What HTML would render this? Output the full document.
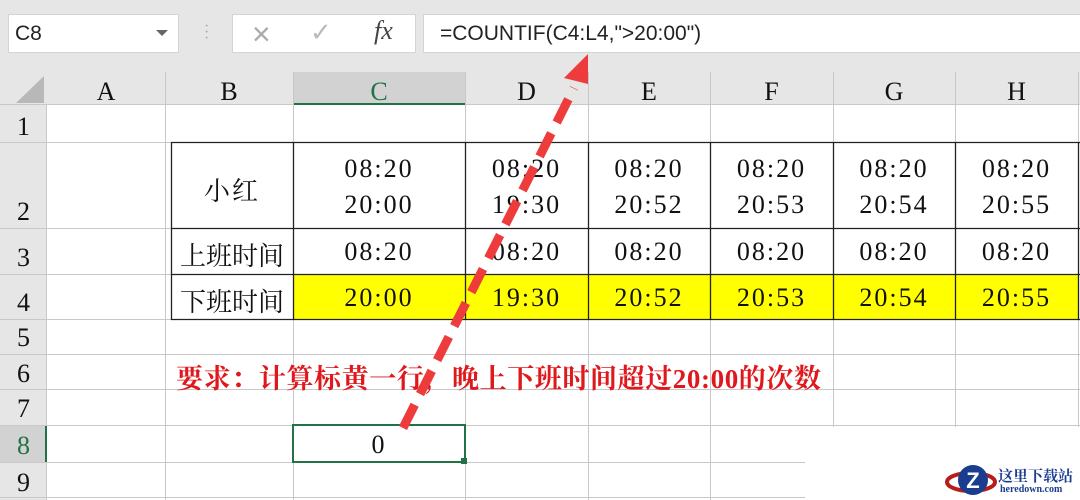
<!DOCTYPE html><html><head><meta charset="utf-8"><style>
body{margin:0;width:1080px;height:500px;overflow:hidden;background:#fff;position:relative;font-family:"Liberation Serif","Noto Serif CJK SC",serif}
.a{position:absolute;box-sizing:border-box}
.top{left:0;top:0;width:1080px;height:72px;background:#e6e6e6}
.box{background:#fff;border:1px solid #d4d4d4}
.hd{background:#e6e6e6}
.t{position:absolute;text-align:center;font-size:26px;color:#111;letter-spacing:2px}
.h{letter-spacing:0}
</style></head><body>
<div class="a top"></div>
<div class="a box" style="left:8px;top:14px;width:171px;height:39px"></div>
<div class="a" style="left:15px;top:22px;font:21px 'Liberation Sans',sans-serif;color:#222">C8</div>
<div class="a" style="left:156px;top:30px;width:0;height:0;border-left:6px solid transparent;border-right:6px solid transparent;border-top:6px solid #666"></div>
<div class="a" style="left:204px;top:24px;color:#aaa;font-size:16px;line-height:6px">·<br>·<br>·</div>
<div class="a box" style="left:232px;top:14px;width:184px;height:39px"></div>
<div class="a" style="left:252px;top:16px;font:32px 'Liberation Sans',sans-serif;color:#aaa">×</div>
<div class="a" style="left:310px;top:18px;font:26px 'DejaVu Sans',sans-serif;color:#bbb">✓</div>
<div class="a" style="left:374px;top:16px;font:italic 26px 'Liberation Serif',serif;color:#444">fx</div>
<div class="a box" style="left:423px;top:14px;width:670px;height:39px"></div>
<div class="a" style="left:440px;top:22px;font:21px 'Liberation Sans',sans-serif;color:#222">=COUNTIF(C4:L4,"&gt;20:00")</div>
<div class="a hd" style="left:0;top:72px;width:1080px;height:33px;border-bottom:1px solid #c8c8c8"></div>
<div class="a hd" style="left:0;top:105px;width:47px;height:395px;border-right:1px solid #c8c8c8"></div>
<div class="a" style="left:16px;top:76px;width:0;height:0;border-left:28px solid transparent;border-bottom:27px solid #b8b8b8"></div>
<div class="a" style="left:293px;top:72px;width:172px;height:33px;background:#d2d2d2;border-bottom:2px solid #217346"></div>
<div class="a" style="left:0;top:425px;width:47px;height:37px;background:#d2d2d2;border-right:2px solid #217346"></div>
<svg class="a" style="left:0;top:72px" width="1080" height="428">
<g stroke="#c8c8c8" stroke-width="1">
<line x1="165.5" y1="0" x2="165.5" y2="428"/><line x1="293.5" y1="0" x2="293.5" y2="428"/><line x1="465.5" y1="0" x2="465.5" y2="428"/><line x1="588.5" y1="0" x2="588.5" y2="428"/><line x1="710.5" y1="0" x2="710.5" y2="428"/><line x1="833.5" y1="0" x2="833.5" y2="428"/><line x1="955.5" y1="0" x2="955.5" y2="428"/><line x1="1078.5" y1="0" x2="1078.5" y2="428"/>
<line x1="0" y1="70.5" x2="1080" y2="70.5"/><line x1="0" y1="156.5" x2="1080" y2="156.5"/><line x1="0" y1="202.5" x2="1080" y2="202.5"/><line x1="0" y1="247.5" x2="1080" y2="247.5"/><line x1="0" y1="282.5" x2="1080" y2="282.5"/><line x1="0" y1="317.5" x2="1080" y2="317.5"/><line x1="0" y1="353.5" x2="1080" y2="353.5"/><line x1="0" y1="390.5" x2="1080" y2="390.5"/><line x1="0" y1="425.5" x2="1080" y2="425.5"/>
</g>
<rect x="293" y="202" width="785" height="45" fill="#ffff00"/>
<g stroke="#222" stroke-width="1.3">
<line x1="171" y1="70.5" x2="1080" y2="70.5"/><line x1="171" y1="156.5" x2="1080" y2="156.5"/><line x1="171" y1="202.5" x2="1080" y2="202.5"/><line x1="171" y1="247.5" x2="1080" y2="247.5"/>
<line x1="171.5" y1="70" x2="171.5" y2="248"/><line x1="293.5" y1="70" x2="293.5" y2="248"/><line x1="465.5" y1="70" x2="465.5" y2="248"/><line x1="588.5" y1="70" x2="588.5" y2="248"/><line x1="710.5" y1="70" x2="710.5" y2="248"/><line x1="833.5" y1="70" x2="833.5" y2="248"/><line x1="955.5" y1="70" x2="955.5" y2="248"/><line x1="1078.5" y1="70" x2="1078.5" y2="248"/>
</g>
<rect x="805" y="355" width="275" height="73" fill="#fff"/>
<rect x="293" y="353" width="172" height="37" fill="#fff" stroke="#217346" stroke-width="2"/>
<rect x="461" y="386" width="6" height="6" fill="#217346"/>
</svg>
<div class="t h" style="left:47px;top:77px;width:118px">A</div>
<div class="t h" style="left:165px;top:77px;width:128px">B</div>
<div class="t h" style="left:293px;top:77px;width:172px;color:#217346">C</div>
<div class="t h" style="left:465px;top:77px;width:123px">D</div>
<div class="t h" style="left:588px;top:77px;width:122px">E</div>
<div class="t h" style="left:710px;top:77px;width:123px">F</div>
<div class="t h" style="left:833px;top:77px;width:122px">G</div>
<div class="t h" style="left:955px;top:77px;width:123px">H</div>
<div class="t h" style="left:0;top:112px;width:47px">1</div>
<div class="t h" style="left:0;top:197px;width:47px">2</div>
<div class="t h" style="left:0;top:243px;width:47px">3</div>
<div class="t h" style="left:0;top:288px;width:47px">4</div>
<div class="t h" style="left:0;top:323px;width:47px">5</div>
<div class="t h" style="left:0;top:359px;width:47px">6</div>
<div class="t h" style="left:0;top:394px;width:47px">7</div>
<div class="t h" style="left:0;top:431px;width:47px;color:#217346">8</div>
<div class="t h" style="left:0;top:468px;width:47px">9</div>
<div class="t" style="left:171px;top:171px;width:122px">小红</div>
<div class="t h" style="left:171px;top:236px;width:122px">上班时间</div>
<div class="t h" style="left:171px;top:282px;width:122px">下班时间</div>
<div class="t" style="left:293px;top:151px;width:172px;line-height:36px">08:20<br>20:00</div>
<div class="t" style="left:465px;top:151px;width:123px;line-height:36px">08:20<br>19:30</div>
<div class="t" style="left:588px;top:151px;width:122px;line-height:36px">08:20<br>20:52</div>
<div class="t" style="left:710px;top:151px;width:123px;line-height:36px">08:20<br>20:53</div>
<div class="t" style="left:833px;top:151px;width:122px;line-height:36px">08:20<br>20:54</div>
<div class="t" style="left:955px;top:151px;width:123px;line-height:36px">08:20<br>20:55</div>
<div class="t" style="left:293px;top:237px;width:172px">08:20</div>
<div class="t" style="left:465px;top:237px;width:123px">08:20</div>
<div class="t" style="left:588px;top:237px;width:122px">08:20</div>
<div class="t" style="left:710px;top:237px;width:123px">08:20</div>
<div class="t" style="left:833px;top:237px;width:122px">08:20</div>
<div class="t" style="left:955px;top:237px;width:123px">08:20</div>
<div class="t" style="left:293px;top:283px;width:172px">20:00</div>
<div class="t" style="left:465px;top:283px;width:123px">19:30</div>
<div class="t" style="left:588px;top:283px;width:122px">20:52</div>
<div class="t" style="left:710px;top:283px;width:123px">20:53</div>
<div class="t" style="left:833px;top:283px;width:122px">20:54</div>
<div class="t" style="left:955px;top:283px;width:123px">20:55</div>
<div class="a" style="left:176px;top:357px;font-size:27px;color:#e0181c;font-weight:bold;white-space:nowrap;letter-spacing:0.6px">要求：计算标黄一行，晚上下班时间超过20:00的次数</div>
<div class="t" style="left:293px;top:430px;width:172px">0</div>
<svg class="a" style="left:0;top:0" width="1080" height="500">
<line x1="403" y1="428" x2="574" y2="88" stroke="#ee3b3b" stroke-width="9" stroke-dasharray="26,12"/>
<polygon points="588,54 564,78 588,84" fill="#ee3b3b"/>
</svg>
<svg class="a" style="left:945px;top:460px" width="55" height="40"><ellipse cx="26" cy="22" rx="24" ry="9" fill="none" stroke="#b81c1c" stroke-width="4"/><circle cx="28" cy="20" r="15" fill="#1b3d8f"/><text x="28" y="28" font-size="22" font-weight="bold" fill="#fff" text-anchor="middle" font-family="Liberation Sans">Z</text></svg>
<div class="a" style="left:998px;top:465px;font-size:15px;font-weight:bold;color:#1b3d8f;font-family:'Noto Serif CJK SC',serif">这里下载站</div>
<div class="a" style="left:1000px;top:484px;font-size:10px;font-weight:bold;color:#1b3d8f">heredown.com</div>
</body></html>
